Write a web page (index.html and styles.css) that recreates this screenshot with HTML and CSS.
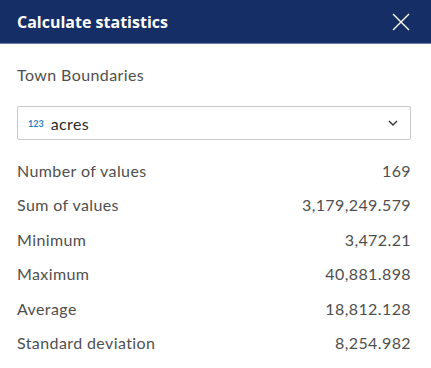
FILE: index.html
```html
<!DOCTYPE html>
<html lang="en">
<head>
    <meta charset="UTF-8">
    <meta name="viewport" content="width=device-width, initial-scale=1.0">
    <title>Calculate statistics</title>
    <link rel="stylesheet" href="styles.css">
</head>
<body>
<div class="panel">
    <div class="panel-header">
        <h2 class="panel-title">Calculate statistics</h2>
        <button class="close-btn" aria-label="Close">
            <svg width="18" height="18" viewBox="0 0 18 18">
                <path d="M1 1 L17 17 M17 1 L1 17" stroke="#fff" stroke-width="1.4" fill="none"/>
            </svg>
        </button>
    </div>

    <div class="panel-body">
        <p class="layer-name">Town Boundaries</p>

        <div class="field-select">
            <span class="field-type">123</span>
            <span class="field-name">acres</span>
            <svg class="chevron" width="10" height="6" viewBox="0 0 10 6">
                <path d="M1 1 L5 5 L9 1" stroke="#333" stroke-width="1.4" fill="none"/>
            </svg>
        </div>

        <ul class="stats">
            <li><span>Number of values</span><span>169</span></li>
            <li><span>Sum of values</span><span>3,179,249.579</span></li>
            <li><span>Minimum</span><span>3,472.21</span></li>
            <li><span>Maximum</span><span>40,881.898</span></li>
            <li><span>Average</span><span>18,812.128</span></li>
            <li><span>Standard deviation</span><span>8,254.982</span></li>
        </ul>
    </div>
</div>
</body>
</html>
```

FILE: styles.css
```css
body {
  margin: 0;
  padding: 0;
  background: #fff;
  font-family: 'Lato', 'Liberation Sans', sans-serif;
  color: #4f4f4f;
}

.panel {
  width: 431px;
  height: 368px;
  background: #fff;
}

.panel-header {
  height: 43px;
  background-color: #152e66;
  border-bottom: 1px solid #6a7ea3;
  display: flex;
  align-items: center;
  justify-content: space-between;
  padding: 0 21px 0 17px;
}

.panel-title {
  margin: 0;
  font-family: 'Open Sans', 'Liberation Sans', sans-serif;
  font-size: 16px;
  font-weight: 700;
  color: #fff;
}

.close-btn {
  background: none;
  border: none;
  padding: 0;
  width: 18px;
  height: 18px;
  cursor: pointer;
}

.panel-body {
  padding: 0 20px 0 17px;
}

.layer-name {
  margin: 0;
  padding-top: 21px;
  height: 41px;
  font-size: 16px;
  line-height: 20px;
  letter-spacing: 0.4px;
}

.field-select {
  height: 32px;
  border: 1px solid #c9c9c9;
  border-radius: 2px;
  display: flex;
  align-items: center;
  padding: 0 10px 0 10px;
}

.field-type {
  font-size: 9px;
  font-weight: 700;
  color: #2b7fcc;
  margin-right: 7px;
}

.field-name {
  font-size: 16px;
  letter-spacing: 0.4px;
  color: #2b2b2b;
  flex-grow: 1;
}

.chevron {
  margin-right: 2px;
}

.stats {
  list-style: none;
  margin: 0;
  padding: 14px 0 0 0;
}

.stats li {
  display: flex;
  justify-content: space-between;
  height: 34.4px;
  line-height: 34.4px;
  font-size: 16px;
  letter-spacing: 0.4px;
}
```
